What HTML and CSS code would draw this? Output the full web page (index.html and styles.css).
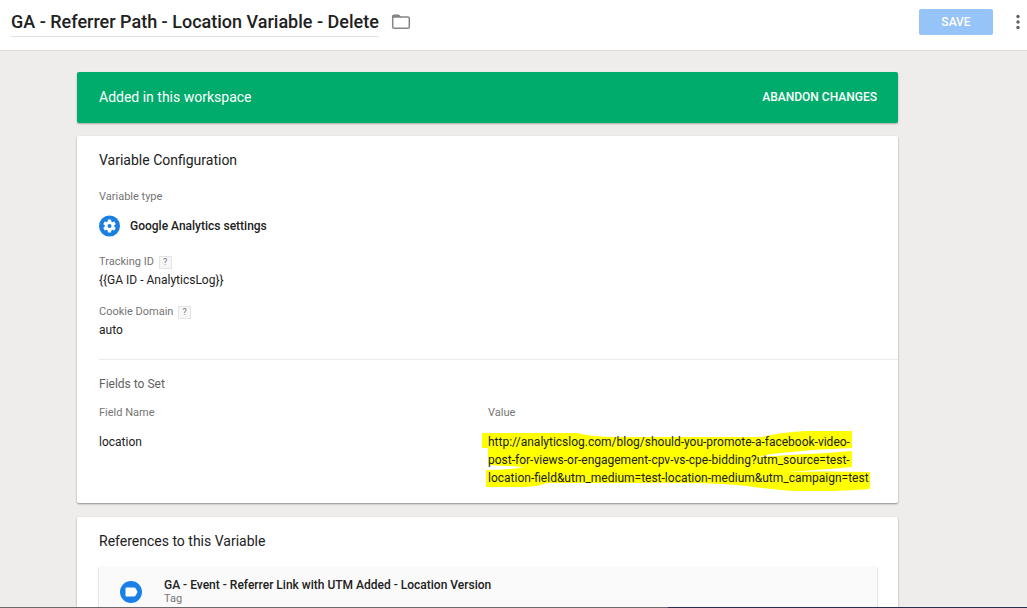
FILE: index.html
```html
<!DOCTYPE html>
<html lang="en">
<head>
    <meta charset="UTF-8">
    <meta name="viewport" content="width=device-width, initial-scale=1.0">
    <title>GA - Referrer Path - Location Variable - Delete</title>
    <link rel="stylesheet" href="styles.css">
</head>
<body>
    <header class="topbar">
        <h1 class="title">GA - Referrer Path - Location Variable - Delete</h1>
        <button type="button" class="icon-btn" aria-label="Move to folder">
            <svg width="20" height="16" viewBox="0 0 20 16">
                <path d="M1.700 2.500Q1.700 1.200 3 1.200H7.500L9.500 3H17Q18.300 3 18.300 4.300V13Q18.300 14.300 17 14.300H3Q1.700 14.300 1.700 13Z" fill="none" stroke="#858585" stroke-width="1.500"/>
                <path d="M1.500 3.800V2.300Q1.500 1 3 1H7.500L10 3.800Z" fill="#858585"/>
            </svg>
        </button>
        <button type="button" class="btn-save" disabled>SAVE</button>
        <button type="button" class="icon-btn btn-more" aria-label="More actions">
            <svg width="4" height="16" viewBox="0 0 4 16" fill="#616161">
                <circle cx="2" cy="2.500" r="1.700"/>
                <circle cx="2" cy="8" r="1.700"/>
                <circle cx="2" cy="13.500" r="1.700"/>
            </svg>
        </button>
    </header>

    <main class="content">
        <div class="banner">
            <span class="banner-text">Added in this workspace</span>
            <button type="button" class="btn-abandon">ABANDON CHANGES</button>
        </div>

        <section class="card">
            <h2 class="card-title">Variable Configuration</h2>
            <div class="label type-label">Variable type</div>
            <div class="type-row">
                <svg width="21" height="22" viewBox="0 0 21 22">
                    <circle cx="10.500" cy="11" r="10.500" fill="#1a7fe0"/>
                    <path transform="translate(2.800 3.300) scale(.642)" fill="#fff" d="M19.430 12.980c.04-.32.07-.64.07-.98s-.03-.66-.07-.98l2.110-1.650c.19-.15.24-.42.12-.64l-2-3.460c-.12-.22-.39-.3-.61-.22l-2.490 1c-.52-.4-1.080-.73-1.690-.98l-.38-2.650C14.460 2.180 14.250 2 14 2h-4c-.25 0-.46.18-.49.42l-.38 2.650c-.61.25-1.170.59-1.690.98l-2.490-1c-.23-.09-.49 0-.61.22l-2 3.460c-.13.22-.07.49.12.64l2.110 1.650c-.04.32-.07.65-.07.98s.03.66.07.98l-2.110 1.650c-.19.15-.24.42-.12.64l2 3.460c.12.22.39.3.61.22l2.490-1c.52.4 1.080.73 1.690.98l.38 2.650c.03.24.24.42.49.42h4c.25 0 .46-.18.49-.42l.38-2.650c.61-.25 1.170-.59 1.690-.98l2.490 1c.23.09.49 0 .61-.22l2-3.460c.12-.22.07-.49-.12-.64z"/>
                    <circle cx="10.500" cy="11" r="2" fill="#1a7fe0"/>
                </svg>
                <span class="type-name">Google Analytics settings</span>
            </div>

            <div class="label">Tracking ID <button type="button" class="help">?</button></div>
            <div class="value">{{GA ID - AnalyticsLog}}</div>
            <div class="label">Cookie Domain <button type="button" class="help">?</button></div>
            <div class="value">auto</div>

            <hr class="divider">

            <h3 class="fields-title">Fields to Set</h3>
            <table class="fields">
                <thead>
                    <tr>
                        <th>Field Name</th>
                        <th>Value</th>
                    </tr>
                </thead>
                <tbody>
                    <tr>
                        <td>location</td>
                        <td>
                            <div class="marked">
                                <!-- highlighter strokes behind the url -->
                                <svg class="marker" width="390" height="62" viewBox="0 0 390 62" fill="#ffff00">
                                    <path d="M0 4H95Q110 8 135 8H280Q300 3 325 2H370V19L330 21Q308 23 290 25L275 28Q310 26 345 24L370 22V38Q335 41 305 43Q340 42 388 43V60Q350 63 310 62Q285 60 265 57Q230 53 150 54H65Q55 58 40 58H4V41Q28 41 42 38L6 36V19H0Z"/>
                                </svg>
                                <span class="url">http://analyticslog.com/blog/should-you-promote-a-facebook-video-post-for-views-or-engagement-cpv-vs-cpe-bidding?utm_source=test-location-field&amp;utm_medium=test-location-medium&amp;utm_campaign=test</span>
                            </div>
                        </td>
                    </tr>
                </tbody>
            </table>
        </section>

        <section class="card">
            <h2 class="card-title">References to this Variable</h2>
            <a href="#" class="reference">
                <svg width="22" height="22" viewBox="0 0 22 22">
                    <circle cx="11" cy="11" r="11" fill="#1a80e8"/>
                    <path d="M6.500 6.500H14Q15 6.500 15.700 7.500L17.500 11L15.700 14.500Q15 15.500 14 15.500H6.500Q5.500 15.500 5.500 14.500V7.500Q5.500 6.500 6.500 6.500Z" fill="#fff"/>
                </svg>
                <span class="reference-text">
                    <span class="reference-name">GA - Event - Referrer Link with UTM Added - Location Version</span>
                    <span class="reference-kind">Tag</span>
                </span>
            </a>
        </section>
    </main>

    <div class="taskbar"></div>
</body>
</html>
```
FILE: styles.css
```css
* { box-sizing: border-box; }
body {
    margin: 0;
    height: 100vh;
    display: flex;
    flex-direction: column;
    overflow: hidden;
    background: #eeedeb;
    color: #212121;
    font-family: Roboto, "Liberation Sans", sans-serif;
    font-size: 12px;
}
h1, h2, h3 { margin: 0; }
button { font-family: inherit; border: none; padding: 0; cursor: pointer; }

.topbar {
    display: flex;
    align-items: center;
    flex-shrink: 0;
    padding: 7px 7px 13px 11px;
    background: #fff;
    border-bottom: 1px solid #dcdcdc;
}
.title {
    font-size: 18px;
    font-weight: 500;
    line-height: 29px;
    border-bottom: 1px solid #e0e0e0;
}
.icon-btn { display: flex; background: none; margin-left: 12px; }
.btn-save {
    width: 74px;
    height: 26px;
    margin-left: auto;
    border-radius: 2px;
    background: #96c3f8;
    color: #fff;
    font-size: 12px;
    font-weight: 500;
}
.btn-more { margin-left: 23px; }

.content { flex: 1; min-height: 0; padding: 21px 129px 0 77px; }
.banner {
    display: flex;
    align-items: center;
    justify-content: space-between;
    height: 51px;
    margin-bottom: 13px;
    padding: 0 21px 2px 22px;
    border-radius: 2px;
    background: #00ac6b;
    color: #fff;
    box-shadow: 0 1px 2px rgba(0, 0, 0, .3);
}
.banner-text { font-size: 14px; }
.btn-abandon { background: none; color: #fff; font-size: 12px; font-weight: 500; }

.card {
    margin-bottom: 14px;
    padding: 14px 21px 12px 22px;
    border-radius: 2px;
    background: #fff;
    box-shadow: 0 1px 2px rgba(0, 0, 0, .4);
}
.card-title { font-size: 14px; font-weight: 400; line-height: 20px; margin-bottom: 16px; }
.label { color: #757575; font-size: 11px; line-height: 16px; }
.type-label { margin-top: 19px; }
.type-row { display: flex; align-items: center; gap: 10px; margin: 10px 0 17px; }
.type-name { font-weight: 500; }
.help {
    width: 13px;
    height: 13px;
    margin-left: 2px;
    border: 1px solid #e4e4e4;
    background: #f7f7f7;
    color: #777;
    font-size: 9px;
    line-height: 11px;
    vertical-align: middle;
}
.value { line-height: 20px; margin-bottom: 14px; }
.divider { margin: 19px -21px 15px 0; border: none; border-top: 1px solid #ebebeb; }

.fields-title { color: #616161; font-size: 12px; font-weight: 400; line-height: 18px; margin-bottom: 12px; }
.fields { width: 100%; table-layout: fixed; border-collapse: collapse; }
.fields th { padding: 0; color: #757575; font-size: 11px; font-weight: 400; line-height: 16px; text-align: left; }
.fields td { padding: 12px 4px 4px 0; line-height: 18px; vertical-align: top; }
.marked { position: relative; }
.marker { position: absolute; left: -6px; top: -4px; }
.url { position: relative; }

.reference {
    display: flex;
    align-items: center;
    gap: 22px;
    height: 50px;
    padding: 0 21px;
    background: #fafafa;
    box-shadow: 0 1px 2px rgba(0, 0, 0, .3);
    color: inherit;
    text-decoration: none;
}
.reference-text { display: flex; flex-direction: column; padding-bottom: 2px; }
.reference-name { font-weight: 500; line-height: 14px; }
.reference-kind { color: #757575; font-size: 11px; line-height: 13px; }

.taskbar {
    position: fixed;
    left: 0;
    right: 0;
    bottom: 0;
    height: 1px;
    background: linear-gradient(to right, #6b696c 65%, #26304f 65%);
}
```
